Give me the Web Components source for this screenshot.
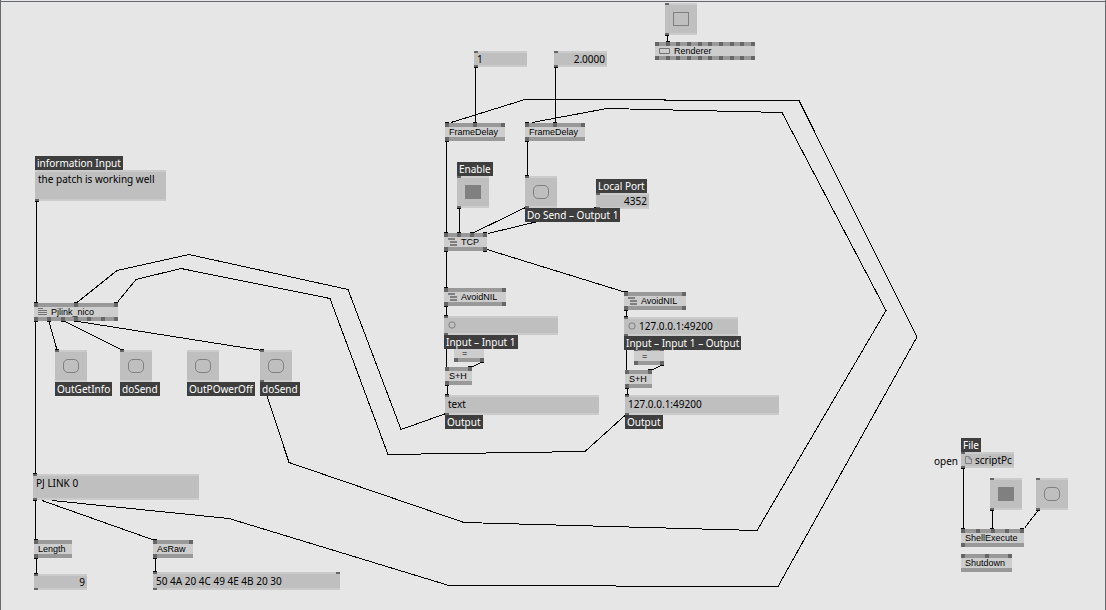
<!DOCTYPE html>
<html lang="en">
<head>
<meta charset="utf-8">
<title>PJLink patch</title>
<style>
  html, body { margin: 0; height: 100%; }
  body { background: #e6e6e6; font: 10px/14px "Noto Sans", "Open Sans", sans-serif; color: #000; }
</style>
</head>
<body>
<patch-canvas>
  <patch-wires></patch-wires>

  <patch-node style="left:655px;top:42px;width:100px" ins="10" outs="10" icon="window">Renderer</patch-node>
  <patch-node style="left:445px;top:123px;width:60px" ins="3" outs="1">FrameDelay</patch-node>
  <patch-node style="left:525px;top:123px;width:60px" ins="3" outs="1">FrameDelay</patch-node>
  <patch-node style="left:444px;top:233px;width:43px" ins="4" outs="2" icon="module">TCP</patch-node>
  <patch-node style="left:444px;top:288px;width:62px" ins="2" outs="2" icon="module">AvoidNIL</patch-node>
  <patch-node style="left:624px;top:292px;width:62px" ins="2" outs="2" icon="module">AvoidNIL</patch-node>
  <patch-node style="left:454px;top:344px;width:30px" ins="3" outs="2" wide>=</patch-node>
  <patch-node style="left:634px;top:347px;width:30px" ins="3" outs="2" wide>=</patch-node>
  <patch-node style="left:445px;top:367px;width:27px" ins="2" outs="1">S+H</patch-node>
  <patch-node style="left:625px;top:370px;width:27px" ins="2" outs="1">S+H</patch-node>
  <patch-node style="left:34px;top:303px;width:84px" ins="3" outs="7" icon="patch">Pjlink_nico</patch-node>
  <patch-node style="left:34px;top:540px;width:38px" ins="1" outs="1">Length</patch-node>
  <patch-node style="left:153px;top:540px;width:40px" ins="2" outs="1">AsRaw</patch-node>
  <patch-node style="left:961px;top:529px;width:63px" ins="5" outs="1">ShellExecute</patch-node>
  <patch-node style="left:961px;top:554px;width:51px" ins="3" outs="0">Shutdown</patch-node>

  <io-value style="left:35px;top:156px" w="131" h="31" ins="0" outs="1" label="information Input" value="the patch is working well" multiline></io-value>
  <io-value style="left:33px;top:474px" w="166" h="26" ins="1" outs="1" value="PJ LINK 0" multiline></io-value>
  <io-value style="left:34px;top:574px" w="53" h="16" ins="1" outs="1" value="9" number></io-value>
  <io-value style="left:153px;top:572px" w="187" h="18" ins="2" outs="1" value="50 4A 20 4C 49 4E 4B 20 30"></io-value>
  <io-value style="left:474px;top:51px" w="53" h="16" ins="1" outs="1" value="1"></io-value>
  <io-value style="left:554px;top:51px" w="53" h="16" ins="1" outs="1" value="2.0000" number></io-value>
  <io-value style="left:596px;top:179px" w="53" h="16" ins="1" outs="1" label="Local Port" value="4352" number></io-value>
  <io-value style="left:444px;top:316px" w="114" h="19" ins="1" outs="1" label="Input – Input 1" below icon="disc" value=""></io-value>
  <io-value style="left:624px;top:317px" w="114" h="19" ins="1" outs="1" label="Input – Input 1 – Output" below icon="disc" value="127.0.0.1:49200"></io-value>
  <io-value style="left:445px;top:395px" w="154" h="20" ins="1" outs="1" label="Output" below value="text"></io-value>
  <io-value style="left:625px;top:395px" w="154" h="20" ins="1" outs="1" label="Output" below value="127.0.0.1:49200"></io-value>
  <io-value style="left:961px;top:438px" w="53" h="16" ins="1" outs="1" label="File" icon="file" value="scriptPc"></io-value>
  <patch-comment style="left:934px;top:454px">open</patch-comment>

  <io-switch style="left:665px;top:3px" kind="toggle" ins="1" outs="1"></io-switch>
  <io-switch style="left:457px;top:162px" kind="toggle" on ins="1" outs="1" label="Enable"></io-switch>
  <io-switch style="left:525px;top:176px" kind="bang" ins="1" outs="1" label="Do Send – Output 1" below></io-switch>
  <io-switch style="left:55px;top:350px" kind="bang" ins="1" outs="0" label="OutGetInfo" below></io-switch>
  <io-switch style="left:120px;top:350px" kind="bang" ins="1" outs="0" label="doSend" below></io-switch>
  <io-switch style="left:187px;top:350px" kind="bang" ins="0" outs="0" label="OutPOwerOff" below></io-switch>
  <io-switch style="left:260px;top:350px" kind="bang" ins="1" outs="1" label="doSend" below></io-switch>
  <io-switch style="left:990px;top:478px" kind="toggle" on ins="1" outs="1"></io-switch>
  <io-switch style="left:1036px;top:478px" kind="bang" ins="1" outs="1"></io-switch>
</patch-canvas>

<script>
const pins = n => '<i></i>'.repeat(Number(n) || 0);

const ICONS = {
  patch: '<svg width="9" height="8" viewBox="0 0 9 8"><path d="M0 .5h5M0 2.5h9M0 4.5h9M0 6.5h9" stroke="#737373"/></svg>',
  module: '<svg width="9" height="8" viewBox="0 0 9 8"><path d="M0 1h7M2 4h7M2 7h7" stroke="#666" stroke-width="1.6"/></svg>',
  window: '<svg width="11" height="6" viewBox="0 0 11 6"><path d="M.5.5h10v5h-10z" fill="none" stroke="#737373"/></svg>',
  disc: '<svg width="8" height="8" viewBox="0 0 8 8"><circle cx="4" cy="4" r="3.2" fill="none" stroke="#808080"/></svg>',
  file: '<svg width="7" height="8" viewBox="0 0 7 8"><path d="M.5.5h3.5l2.5 2.5v4.5h-6zM4 .5v2.5h2.5" fill="none" stroke="#808080"/></svg>'
};

/* The free canvas that holds the wires and the nodes. */
customElements.define('patch-canvas', class extends HTMLElement {
  connectedCallback() {
    this.attachShadow({ mode: 'open' }).innerHTML = `
      <style>
        :host { display: block; position: relative; min-height: 100%; box-sizing: border-box; overflow: hidden;
                border: solid #666a6e; border-width: 0 1px; }
        :host::before { content: ""; display: block; height: 1px; border-bottom: 1px solid #666a6e; }
        .plane { position: absolute; inset: 0 -1px 0 -1px; }
        ::slotted(*) { position: absolute; }
      </style>
      <div class="plane"><slot></slot></div>`;
  }
});

/* Connections between pins, with a short cap where a wire meets a pin. */
customElements.define('patch-wires', class extends HTMLElement {
  connectedCallback() {
    const lines = [
      '36.5,201 36.5,303', '35.5,321 35.5,474', '35.5,500 35.5,540', '36.5,558 36.5,574', '155.5,558 155.5,572',
      '475.5,67 475.5,123', '555.5,67 555.5,123', '527.5,141 527.5,176',
      '446.5,141 446.5,233', '446.5,251 446.5,288', '446.5,306 446.5,316', '446.5,335 446.5,367', '447.5,385 447.5,395',
      '626.5,310 626.5,317', '626.5,336 626.5,370', '627.5,388 627.5,395',
      '459.5,208 459.5,233', '525.5,207.5 474,232.5', '596,207.5 488,233.5', '487,249.5 626,292.5',
      '481,362.5 471,367.5', '661,365.5 651,370.5',
      '963.5,468 963.5,529', '992.5,510 992.5,529', '1038,510.5 1025,527.5', '667.5,35 667.5,42',
      '49,321.5 57,350', '65,321.5 122,350', '78,321.5 262,350.5', '42,500.5 155,540.5',
      '451,122.5 525,99.5 799,100.5 917,337 778,586.5 449,585.5 229,518.5 52,500.5',
      '532,122.5 607,108.5 782,112.5 886,310.5 757,530.5 464,522.5 289,462.5 267,396',
      '77,302.5 117,270.5 189,254.5 348,289.5 401,429.5 446,413.5',
      '118,301.5 136,279.5 181,268.5 330,298.5 388,454.5 585,451.5 626,414.5'
    ];
    const caps = [[35,201],[34,302],[74,302],[114,302],[34,321],[47,321],[61,321],[74,321],[55,349],[120,349],[260,349],
      [33,473],[33,500],[34,539],[34,558],[34,573],[153,539],[153,558],[153,571],
      [474,67],[554,67],[445,122],[473,122],[525,122],[553,122],[445,141],[525,141],[525,175],[457,208],[594,207],
      [444,232],[457,232],[470,232],[483,232],[444,251],[483,251],[444,287],[444,306],[444,315],
      [624,291],[624,310],[624,316],[480,362],[468,366],[660,365],[648,369],[445,385],[445,394],[625,388],[625,394],
      [961,468],[961,528],[990,510],[990,528],[1020,528],[1036,510],[665,35],[666,41]];
    this.attachShadow({ mode: 'open' }).innerHTML = `
      <style>
        :host { display: block; inset: 0; }
        svg { display: block; width: 100%; height: 100%; }
        g { fill: none; stroke: #000; stroke-width: 1; shape-rendering: crispEdges; }
      </style>
      <svg aria-hidden="true"><g>
        ${lines.map(p => `<polyline points="${p}"/>`).join('')}
        <path d="${caps.map(([x, y]) => `M${x} ${y}.5h4`).join('')}"/>
      </g></svg>`;
  }
});

/* A function node: input pins, name, output pins. */
customElements.define('patch-node', class extends HTMLElement {
  connectedCallback() {
    const icon = this.getAttribute('icon');
    this.attachShadow({ mode: 'open' }).innerHTML = `
      <style>
        :host { display: flex; flex-direction: column; background: #cdcdcd; font: 9px/10px "Liberation Sans", Arial, sans-serif; }
        .bar { display: flex; justify-content: space-between; height: 4px; background: #999; }
        .bar i { width: 4px; background: #666; }
        /* Positioned so that descenders are drawn over the lower bar. */
        .name { position: relative; display: flex; align-items: center; gap: 4px; height: 10px; padding-left: 4px; white-space: nowrap; }
        :host([wide]) .name { padding-left: 8px; }
        svg { flex: none; display: block; }
      </style>
      <div class="bar">${pins(this.getAttribute('ins'))}</div>
      <div class="name">${icon ? ICONS[icon] : ''}<span><slot></slot></span></div>
      <div class="bar">${pins(this.getAttribute('outs'))}</div>`;
  }
});

const IO_STYLE = `
  :host { display: flex; flex-direction: column; align-items: flex-start; }
  label { order: -1; padding: 0 2px; background: #3e3e3e; color: #fff; white-space: nowrap; }
  :host([below]) label { order: 1; }
  .box { display: flex; flex-direction: column; background: #bfbfbf; }
  .edge { display: flex; justify-content: space-between; flex: none; height: 2px; background: #cbcbcb; }
  .edge i { width: 4px; background: #666; }`;

/* A box that shows and edits a value. */
customElements.define('io-value', class extends HTMLElement {
  connectedCallback() {
    const a = n => this.getAttribute(n), icon = a('icon'), label = a('label');
    const name = label ? '' : 'aria-label="Value"';
    const field = this.hasAttribute('multiline')
      ? `<textarea id="f" ${name} spellcheck="false">${a('value')}</textarea>`
      : `<input id="f" ${name} type="text" spellcheck="false" value="${a('value')}">`;
    this.attachShadow({ mode: 'open' }).innerHTML = `
      <style>${IO_STYLE}
        .box { width: ${a('w')}px; height: ${a('h')}px; }
        .body { display: flex; align-items: center; flex: 1; min-height: 0; }
        :host([below]) .body { padding-bottom: 2px; }
        .body svg { flex: none; margin-left: 4px; }
        input, textarea { flex: 1; min-width: 0; width: 0; height: 100%; box-sizing: border-box; margin: 0; border: 0; outline: 0;
          padding: 0 2px 0 3px; background: none; color: inherit; font: inherit; resize: none; overflow: hidden; }
        :host([number]) input { text-align: right; }
      </style>
      <div class="box">
        <div class="edge">${pins(a('ins'))}</div>
        <div class="body">${icon ? ICONS[icon] : ''}${field}</div>
        <div class="edge">${pins(a('outs'))}</div>
      </div>
      ${label ? `<label for="f">${label}</label>` : ''}`;
  }
});

/* A square box with a bang button or a toggle. */
customElements.define('io-switch', class extends HTMLElement {
  connectedCallback() {
    const a = n => this.getAttribute(n), label = a('label');
    const name = label ? '' : `aria-label="${a('kind')}"`;
    const field = a('kind') === 'toggle'
      ? `<input id="f" type="checkbox" ${name} ${this.hasAttribute('on') ? 'checked' : ''}>`
      : `<button id="f" type="button" ${name}></button>`;
    this.attachShadow({ mode: 'open' }).innerHTML = `
      <style>${IO_STYLE}
        .box { width: 32px; height: 32px; }
        .body { display: grid; place-items: center; flex: 1; }
        input, button { appearance: none; box-sizing: border-box; width: 16px; height: 14px; margin: 0; padding: 0;
          border: 1px solid #808080; background: none; }
        button { border-radius: 5px; }
        input:checked { background: #808080; }
      </style>
      <div class="box">
        <div class="edge">${pins(a('ins'))}</div>
        <div class="body">${field}</div>
        <div class="edge">${pins(a('outs'))}</div>
      </div>
      ${label ? `<label for="f">${label}</label>` : ''}`;
  }
});

/* Plain text on the canvas. */
customElements.define('patch-comment', class extends HTMLElement {
  connectedCallback() {
    this.attachShadow({ mode: 'open' }).innerHTML = '<style>:host { display: block; }</style><slot></slot>';
  }
});
</script>
</body>
</html>
